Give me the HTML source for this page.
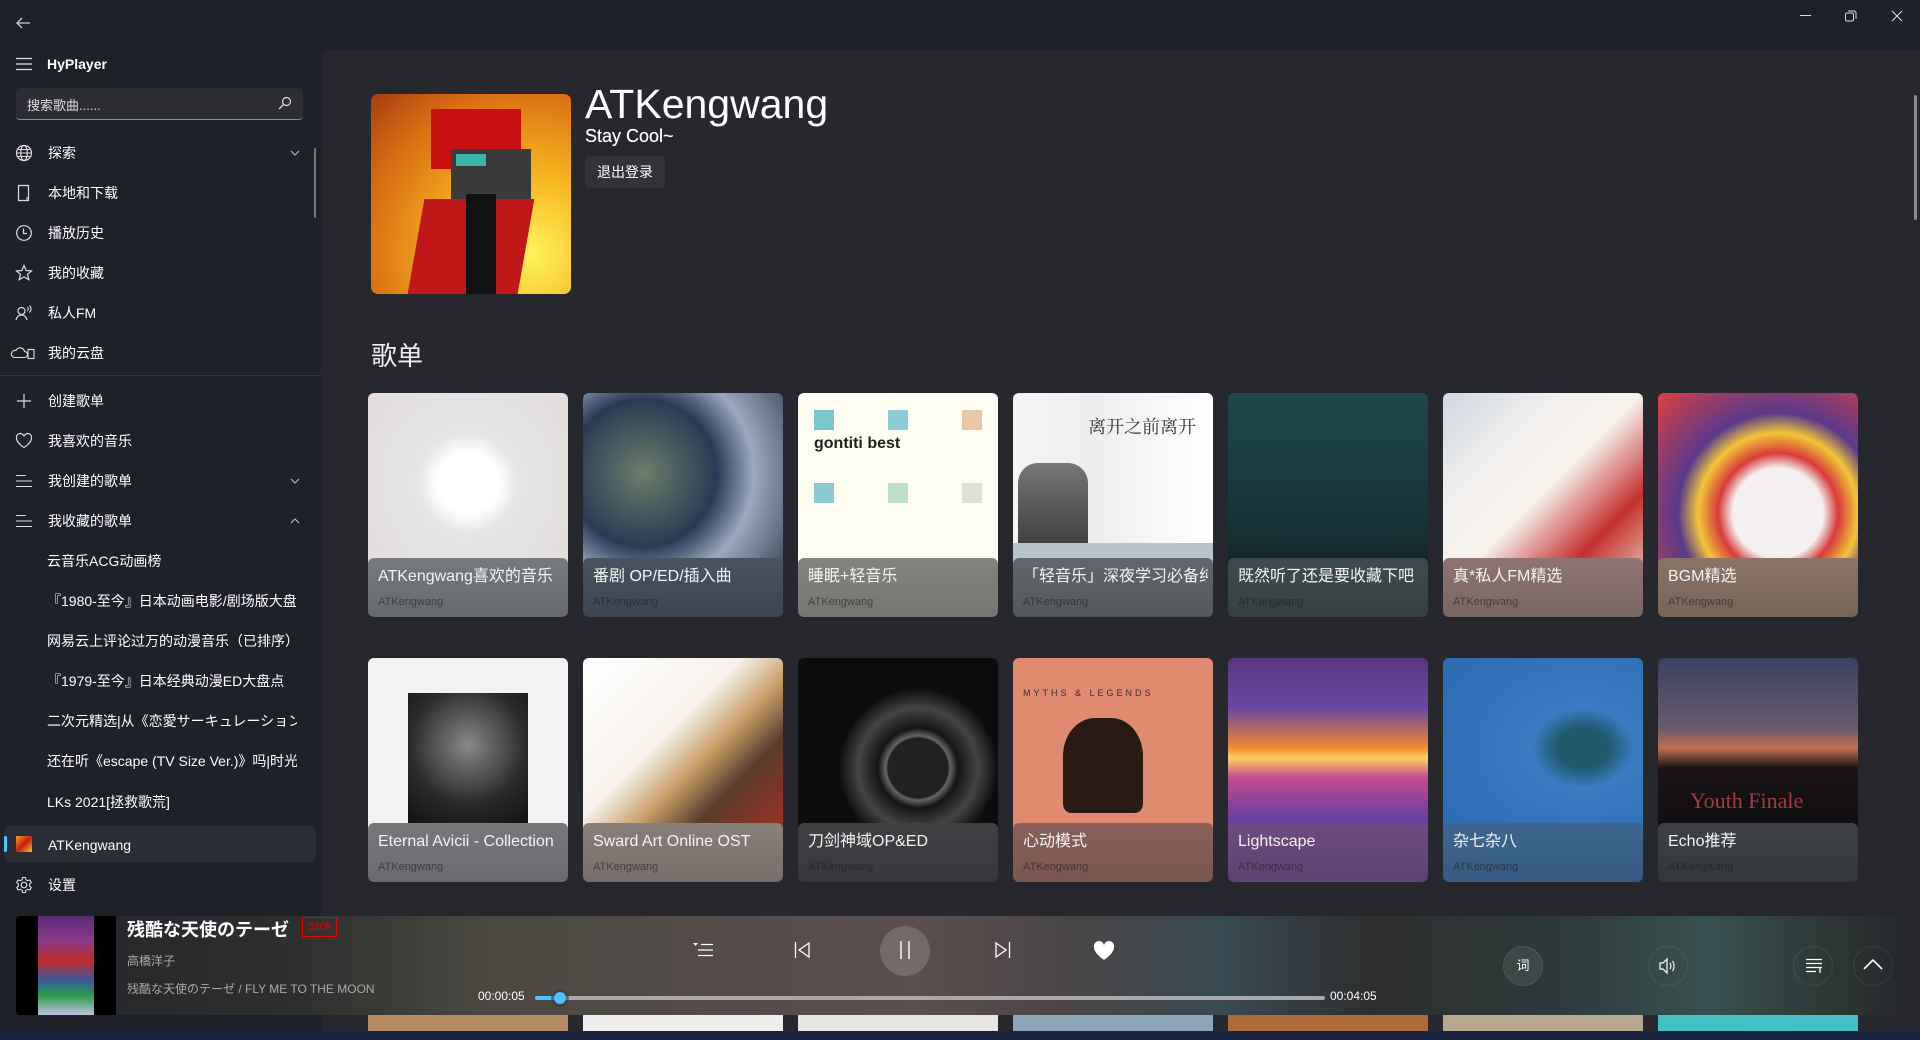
<!DOCTYPE html>
<html><head><meta charset="utf-8"><style>
*{margin:0;padding:0;box-sizing:border-box}
body{width:1920px;height:1040px;overflow:hidden;background:#1f2128;font-family:"Liberation Sans","Noto Sans CJK SC",sans-serif;color:#fff;position:relative}
.abs{position:absolute}
.panel{left:321px;top:49px;right:0;bottom:0;background:#26282d;border-top-left-radius:8px}
.nav{left:0;width:321px;font-size:14px;height:40px;line-height:40px}
.nav .ic{position:absolute;left:14px;top:10px;width:20px;height:20px}
.nav .t{position:absolute;left:48px;top:0;white-space:nowrap;width:250px;overflow:hidden}
.sub .t{left:47px}
.card{width:200px;height:224px;border-radius:6px;overflow:hidden}
.card .img{position:absolute;left:0;top:0;width:200px;height:200px}
.card .cap{position:absolute;left:0;top:165px;width:200px;height:59px;border-radius:6px 6px 0 0}
.card .ct{position:absolute;left:10px;top:9px;font-size:16px;line-height:20px;white-space:nowrap;width:185px;overflow:hidden;color:#f4f4f4}
.card .cs{position:absolute;left:10px;top:38px;font-size:11px;color:rgba(30,30,30,.6)}
.circ{border-radius:50%;border:1px solid rgba(255,255,255,.08)}
</style></head><body>
<svg class="abs" style="left:14px;top:15px" width="18" height="16" viewBox="0 0 18 16"><path d="M16 8H3M8 3L3 8l5 5" stroke="#ccc" stroke-width="1.3" fill="none"/></svg>
<div class="abs" style="left:1800px;top:15px;width:11px;height:1px;background:#ddd"></div>
<svg class="abs" style="left:1845px;top:10px" width="12" height="12"><rect x="0.5" y="3" width="8" height="8" rx="1.5" stroke="#ddd" fill="none"/><path d="M3 1h6a2 2 0 0 1 2 2v6" stroke="#ddd" fill="none"/></svg>
<svg class="abs" style="left:1891px;top:10px" width="12" height="12"><path d="M1 1l10 10M11 1L1 11" stroke="#ddd" stroke-width="1"/></svg>

<div class="abs panel"></div>
<div class="abs" style="left:1914px;top:95px;width:3px;height:125px;background:#8a8b8e;border-radius:2px"></div>

<svg class="abs" style="left:16px;top:57px" width="16" height="14"><path d="M0 1.5h16M0 7h16M0 12.5h16" stroke="#ddd" stroke-width="1.2"/></svg>
<div class="abs" style="left:47px;top:56px;font-size:14px;font-weight:bold">HyPlayer</div>
<div class="abs" style="left:16px;top:88px;width:287px;height:32px;background:#2c2e34;border-radius:4px;border-bottom:1px solid #8a8b8e"></div>
<div class="abs" style="left:27px;top:95px;font-size:13px;color:#ddd">搜索歌曲......</div>
<svg class="abs" style="left:278px;top:96px" width="14" height="14"><circle cx="8.5" cy="5.5" r="4" stroke="#ddd" fill="none" stroke-width="1.2"/><path d="M5.5 8.5L1 13" stroke="#ddd" stroke-width="1.3"/></svg>
<div class="abs" style="left:314px;top:148px;width:2px;height:70px;background:#777;border-radius:1px"></div>

<div class="abs nav" style="top:133px"><svg class="ic" viewBox="0 0 20 20"><circle cx="10" cy="10" r="7.5" fill="none" stroke="#ddd" stroke-width="1.2"/><ellipse cx="10" cy="10" rx="3.3" ry="7.5" fill="none" stroke="#ddd" stroke-width="1.2"/><path d="M2.5 10h15M3.5 6.5h13M3.5 13.5h13" stroke="#ddd" stroke-width="1.1"/></svg><span class="t">探索</span><svg class="abs" style="left:290px;top:17px" width="10" height="6"><path d="M1 1l4 4 4-4" stroke="#ccc" fill="none"/></svg></div>
<div class="abs nav" style="top:173px"><svg class="ic" viewBox="0 0 20 20"><path d="M4.5 2.5h10v15h-10z" fill="none" stroke="#ddd" stroke-width="1.2"/><path d="M13 14v3" stroke="#ddd"/></svg><span class="t">本地和下载</span></div>
<div class="abs nav" style="top:213px"><svg class="ic" viewBox="0 0 20 20"><circle cx="10" cy="10" r="7.3" fill="none" stroke="#ddd" stroke-width="1.2"/><path d="M9.5 5.5V10.5H13" stroke="#ddd" fill="none" stroke-width="1.2"/></svg><span class="t">播放历史</span></div>
<div class="abs nav" style="top:253px"><svg class="ic" viewBox="0 0 20 20"><path d="M10 2.5l2.2 5 5.3.4-4 3.5 1.3 5.3L10 13.9l-4.8 2.8 1.3-5.3-4-3.5 5.3-.4z" fill="none" stroke="#ddd" stroke-width="1.2"/></svg><span class="t">我的收藏</span></div>
<div class="abs nav" style="top:293px"><svg class="ic" viewBox="0 0 20 20"><circle cx="7.5" cy="8" r="3.5" fill="none" stroke="#ddd" stroke-width="1.2"/><path d="M2 17c1-4 3.5-5 5.5-5s4.5 1 5.5 5" fill="none" stroke="#ddd" stroke-width="1.2"/><path d="M13.5 4c1 1 1 3 0 4M15.5 2.5c2 2 2 5 0 7" fill="none" stroke="#ddd" stroke-width="1.1"/></svg><span class="t">私人FM</span></div>
<div class="abs nav" style="top:333px"><svg class="ic" style="left:10px;width:26px" viewBox="0 0 26 20"><path d="M4 14.5h10.5a3 3 0 0 0 0-6 4.5 4.5 0 0 0-8.5-1A3.5 3.5 0 0 0 4 14.5z" fill="none" stroke="#ddd" stroke-width="1.1"/><rect x="18" y="6.5" width="6" height="9" fill="none" stroke="#ddd" stroke-width="1.1"/></svg><span class="t">我的云盘</span></div>
<div class="abs" style="left:0;top:375px;width:321px;height:1px;background:#33353b"></div>
<div class="abs nav" style="top:381px"><svg class="ic" viewBox="0 0 20 20"><path d="M10 3v14M3 10h14" stroke="#ddd" stroke-width="1.2"/></svg><span class="t">创建歌单</span></div>
<div class="abs nav" style="top:421px"><svg class="ic" viewBox="0 0 20 20"><path d="M10 16.5S2.5 12 2.5 7.2A3.8 3.8 0 0 1 10 5.5a3.8 3.8 0 0 1 7.5 1.7C17.5 12 10 16.5 10 16.5z" fill="none" stroke="#ddd" stroke-width="1.2"/></svg><span class="t">我喜欢的音乐</span></div>
<div class="abs nav" style="top:461px"><svg class="ic" viewBox="0 0 20 20"><path d="M2 4.5h10M2 10h16M2 15.5h16" stroke="#ddd" stroke-width="1.1"/></svg><span class="t">我创建的歌单</span><svg class="abs" style="left:290px;top:17px" width="10" height="6"><path d="M1 1l4 4 4-4" stroke="#ccc" fill="none"/></svg></div>
<div class="abs nav" style="top:501px"><svg class="ic" viewBox="0 0 20 20"><path d="M2 4.5h10M2 10h16M2 15.5h16" stroke="#ddd" stroke-width="1.1"/></svg><span class="t">我收藏的歌单</span><svg class="abs" style="left:290px;top:17px" width="10" height="6"><path d="M1 5l4-4 4 4" stroke="#ccc" fill="none"/></svg></div>
<div class="abs nav sub" style="top:541px"><span class="t">云音乐ACG动画榜</span></div>
<div class="abs nav sub" style="top:581px"><span class="t">『1980-至今』日本动画电影/剧场版大盘点</span></div>
<div class="abs nav sub" style="top:621px"><span class="t">网易云上评论过万的动漫音乐（已排序）</span></div>
<div class="abs nav sub" style="top:661px"><span class="t">『1979-至今』日本经典动漫ED大盘点</span></div>
<div class="abs nav sub" style="top:701px"><span class="t">二次元精选|从《恋愛サーキュレーション》</span></div>
<div class="abs nav sub" style="top:741px"><span class="t">还在听《escape (TV Size Ver.)》吗|时光机</span></div>
<div class="abs nav sub" style="top:782px"><span class="t">LKs 2021[拯救歌荒]</span></div>
<div class="abs" style="left:4px;top:826px;width:312px;height:36px;background:#2c2e35;border-radius:5px"></div>
<div class="abs" style="left:4px;top:836px;width:3px;height:16px;background:#4cc2ff;border-radius:2px"></div>
<div class="abs" style="left:16px;top:836px;width:16px;height:16px;background:linear-gradient(135deg,#f6a21a,#c81d12 50%,#f3c030)"></div>
<div class="abs nav" style="top:825px"><span class="t">ATKengwang</span></div>
<div class="abs nav" style="top:865px"><svg class="ic" viewBox="0 0 20 20"><circle cx="10" cy="10" r="2.8" fill="none" stroke="#ddd" stroke-width="1.2"/><path d="M8.6 2.5h2.8l.5 2.2 1.8 1 2.2-.7 1.4 2.4-1.7 1.6v2l1.7 1.6-1.4 2.4-2.2-.7-1.8 1-.5 2.2H8.6l-.5-2.2-1.8-1-2.2.7-1.4-2.4L4.4 11V9L2.7 7.4l1.4-2.4 2.2.7 1.8-1z" fill="none" stroke="#ddd" stroke-width="1.1"/></svg><span class="t">设置</span></div>

<div class="abs" style="left:371px;top:94px;width:200px;height:200px;border-radius:7px;overflow:hidden;background:radial-gradient(circle at 80% 80%,#fff35a,#f7b51e 35%,#d86a12 75%,#a33e10)">
  <div class="abs" style="left:60px;top:15px;width:90px;height:60px;background:#c81010"></div>
  <div class="abs" style="left:80px;top:55px;width:80px;height:50px;background:#3a3a3a"></div>
  <div class="abs" style="left:85px;top:60px;width:30px;height:12px;background:#3bb5a8"></div>
  <div class="abs" style="left:45px;top:105px;width:110px;height:95px;background:#c01818;transform:skewX(-10deg)"></div>
  <div class="abs" style="left:95px;top:100px;width:30px;height:100px;background:#111"></div>
</div>
<div class="abs" style="left:585px;top:81px;font-size:41px;color:#fff">ATKengwang</div>
<div class="abs" style="left:585px;top:126px;font-size:18px;color:#fff;text-shadow:0 0 .5px #fff">Stay Cool~</div>
<div class="abs" style="left:585px;top:156px;width:80px;height:32px;background:#313338;border-radius:4px;font-size:14px;line-height:32px;text-align:center">退出登录</div>
<div class="abs" style="left:371px;top:336px;font-size:26px;color:#eee">歌单</div>

<div class="abs card" style="left:368px;top:393px"><div class="img" style="background:radial-gradient(circle at 50% 45%,#fff 0 30px,#e6e6e6 50px,#e2dada)"></div><div class="cap" style="background:linear-gradient(#777a7c,#66696b)"><div class="ct">ATKengwang喜欢的音乐</div><div class="cs">ATKengwang</div></div></div>
<div class="abs card" style="left:583px;top:393px"><div class="img" style="background:radial-gradient(circle at 30% 40%,#6a7f6a,#2a3a55 40%,#9aa8c0 60%,#2b3646)"></div><div class="cap" style="background:linear-gradient(#4a5360,#3c4450)"><div class="ct">番剧 OP/ED/插入曲</div><div class="cs">ATKengwang</div></div></div>
<div class="abs card" style="left:798px;top:393px"><div class="img" style="background:#fdfdf2"><div class="abs" style="left:16px;top:42px;font-size:16px;font-weight:bold;color:#222">gontiti best</div><div class="abs" style="left:16px;top:17px;width:20px;height:20px;background:#7cc6d0"></div><div class="abs" style="left:90px;top:17px;width:20px;height:20px;background:#8ccad5"></div><div class="abs" style="left:164px;top:17px;width:20px;height:20px;background:#e8c6a8"></div><div class="abs" style="left:16px;top:90px;width:20px;height:20px;background:#8bc9d4"></div><div class="abs" style="left:90px;top:90px;width:20px;height:20px;background:#bde0c8"></div><div class="abs" style="left:164px;top:90px;width:20px;height:20px;background:#e0e0d8"></div></div><div class="cap" style="background:linear-gradient(#828480,#747672)"><div class="ct">睡眠+轻音乐</div><div class="cs">ATKengwang</div></div></div>
<div class="abs card" style="left:1013px;top:393px"><div class="img" style="background:linear-gradient(90deg,#f4f4f4,#eee 40%,#fff);"><div class="abs" style="left:5px;top:70px;width:70px;height:100px;background:linear-gradient(#777,#333);border-radius:20px 20px 0 0"></div><div class="abs" style="left:75px;top:20px;font-size:18px;color:#333;font-family:'Noto Serif CJK SC',serif">离开之前离开</div><div class="abs" style="left:0;top:150px;width:200px;height:20px;background:#b8c4cc"></div></div><div class="cap" style="background:linear-gradient(#62666a,#55595e)"><div class="ct">「轻音乐」深夜学习必备纯音乐</div><div class="cs">ATKengwang</div></div></div>
<div class="abs card" style="left:1228px;top:393px"><div class="img" style="background:linear-gradient(#1d4a4e,#163236 70%,#0f1a1c)"></div><div class="cap" style="background:linear-gradient(#3f4b4e,#35403f)"><div class="ct">既然听了还是要收藏下吧</div><div class="cs">ATKengwang</div></div></div>
<div class="abs card" style="left:1443px;top:393px"><div class="img" style="background:linear-gradient(135deg,#cfd8e0,#f2f0ee 30%,#f7f2ec 50%,#c43030 75%,#e9d5c0)"></div><div class="cap" style="background:linear-gradient(#8e7472,#7a6664)"><div class="ct">真*私人FM精选</div><div class="cs">ATKengwang</div></div></div>
<div class="abs card" style="left:1658px;top:393px"><div class="img" style="background:radial-gradient(circle at 60% 60%,#f4f0f0 0 45px,#d83a3a 60px,#f2c638 80px,#5a3a8a 100px,#e04040)"></div><div class="cap" style="background:linear-gradient(#8a7466,#786458)"><div class="ct">BGM精选</div><div class="cs">ATKengwang</div></div></div>

<div class="abs card" style="left:368px;top:658px"><div class="img" style="background:#f2f2f2"><div class="abs" style="left:40px;top:35px;width:120px;height:130px;background:radial-gradient(circle at 50% 40%,#888,#2a2a2a 60%,#111)"></div></div><div class="cap" style="background:linear-gradient(#76787b,#696b6e)"><div class="ct">Eternal Avicii - Collection</div><div class="cs">ATKengwang</div></div></div>
<div class="abs card" style="left:583px;top:658px"><div class="img" style="background:linear-gradient(135deg,#fff,#f6f1ea 40%,#c9a06a 55%,#5a3a2a 70%,#b03020)"></div><div class="cap" style="background:linear-gradient(#8a807a,#776e6a)"><div class="ct">Sward Art Online OST</div><div class="cs">ATKengwang</div></div></div>
<div class="abs card" style="left:798px;top:658px"><div class="img" style="background:radial-gradient(circle at 60% 55%,#222 0 30px,#666 32px,#151515 40px,#444 60px,#0c0c0c 80px)"></div><div class="cap" style="background:linear-gradient(#3f4144,#36383b)"><div class="ct">刀剑神域OP&amp;ED</div><div class="cs">ATKengwang</div></div></div>
<div class="abs card" style="left:1013px;top:658px"><div class="img" style="background:#e08a70"><div class="abs" style="left:10px;top:30px;font-size:9px;letter-spacing:3px;color:#333">MYTHS &amp; LEGENDS</div><div class="abs" style="left:50px;top:60px;width:80px;height:95px;background:#2a1a14;border-radius:40% 40% 10% 10%"></div></div><div class="cap" style="background:linear-gradient(#8a6058,#7a5650)"><div class="ct">心动模式</div><div class="cs">ATKengwang</div></div></div>
<div class="abs card" style="left:1228px;top:658px"><div class="img" style="background:linear-gradient(#5b3580,#6a48a0 25%,#f08a30 45%,#ffd060 50%,#c04a90 60%,#6a40a0 80%,#4a3a9a)"></div><div class="cap" style="background:linear-gradient(#6e4a80,#5e4272)"><div class="ct">Lightscape</div><div class="cs">ATKengwang</div></div></div>
<div class="abs card" style="left:1443px;top:658px"><div class="img" style="background:radial-gradient(ellipse at 70% 45%,#1e5a6a 0 25px,#3a7ac0 50px,#2a68b0)"></div><div class="cap" style="background:linear-gradient(#3e6690,#365b82)"><div class="ct">杂七杂八</div><div class="cs">ATKengwang</div></div></div>
<div class="abs card" style="left:1658px;top:658px"><div class="img" style="background:linear-gradient(#3a4060,#6a5a70 35%,#c07050 45%,#1a1416 55%,#0a0a0a)"><div class="abs" style="left:32px;top:130px;font-size:22px;color:#a33b44;font-family:'Liberation Serif',serif">Youth Finale</div></div><div class="cap" style="background:linear-gradient(#3e4246,#34383c)"><div class="ct">Echo推荐</div><div class="cs">ATKengwang</div></div></div>

<div class="abs" style="left:368px;top:1012px;width:200px;height:20px;background:#b48a60"></div>
<div class="abs" style="left:583px;top:1012px;width:200px;height:20px;background:#eee"></div>
<div class="abs" style="left:798px;top:1012px;width:200px;height:20px;background:#e8e6e2"></div>
<div class="abs" style="left:1013px;top:1012px;width:200px;height:20px;background:#8aa6b8"></div>
<div class="abs" style="left:1228px;top:1012px;width:200px;height:20px;background:#b06a38"></div>
<div class="abs" style="left:1443px;top:1012px;width:200px;height:20px;background:#b8a890"></div>
<div class="abs" style="left:1658px;top:1012px;width:200px;height:20px;background:#42c0c8"></div>
<div class="abs" style="left:0;top:1031px;width:1920px;height:9px;background:#1a2440"></div>

<div class="abs" style="left:16px;top:916px;width:1882px;height:99px;border-radius:4px;background:linear-gradient(90deg,#23252a 0%,#2e302f 15%,#4a4840 25%,#544c4a 38%,#5a4e4e 48%,#4a4646 56%,#384a52 64%,#2f2f2f 72%,#2e3a3a 82%,#385150 90%,#2c3533 97%,#272a2d 100%)"></div>
<div class="abs" style="left:16px;top:916px;width:100px;height:99px;background:#000;border-radius:4px 0 0 4px"><div class="abs" style="left:22px;top:0;width:56px;height:99px;background:linear-gradient(#5a2a7a,#8a3a8a 25%,#c02a2a 45%,#3a5a9a 65%,#2a9a4a 80%,#c0c0e0)"></div></div>
<div class="abs" style="left:127px;top:916px;font-size:18px;font-weight:bold">残酷な天使のテーゼ</div>
<div class="abs" style="left:302px;top:917px;width:35px;height:20px;border:1px solid #e00;color:#e00;font-size:11px;line-height:18px;text-align:center">320k</div>
<div class="abs" style="left:127px;top:952px;font-size:12px;color:#aaa">高橋洋子</div>
<div class="abs" style="left:127px;top:980px;font-size:12px;color:#aaa">残酷な天使のテーゼ / FLY ME TO THE MOON</div>

<svg class="abs" style="left:692px;top:942px" width="22" height="16"><path d="M1 1h5l-2.5 3z" fill="#fff"/><path d="M9 2.5h12M6 8h15M6 13.5h15" stroke="#fff" stroke-width="1.3"/></svg>
<svg class="abs" style="left:794px;top:941px" width="16" height="18"><path d="M1.5 1v16" stroke="#fff" stroke-width="1.3"/><path d="M15 2L5 9l10 7z" fill="none" stroke="#fff" stroke-width="1.3"/></svg>
<div class="abs" style="left:880px;top:926px;width:50px;height:50px;border-radius:50%;background:rgba(140,128,130,.55)"></div>
<svg class="abs" style="left:897px;top:940px" width="16" height="20"><path d="M4 1v18M12 1v18" stroke="#fff" stroke-width="1.4"/></svg>
<svg class="abs" style="left:995px;top:941px" width="16" height="18"><path d="M14.5 1v16" stroke="#fff" stroke-width="1.3"/><path d="M1 2l10 7-10 7z" fill="none" stroke="#fff" stroke-width="1.3"/></svg>
<svg class="abs" style="left:1093px;top:941px" width="22" height="20"><path d="M11 19S1 12.5 1 6.3A5 5 0 0 1 11 4a5 5 0 0 1 10 2.3C21 12.5 11 19 11 19z" fill="#fff"/></svg>

<div class="abs" style="left:478px;top:989px;font-size:12px">00:00:05</div>
<div class="abs" style="left:535px;top:996px;width:790px;height:4px;background:#a8a8a6;border-radius:2px"></div>
<div class="abs" style="left:535px;top:996px;width:25px;height:4px;background:#4cc2ff;border-radius:2px"></div>
<div class="abs" style="left:554px;top:992px;width:12px;height:12px;border-radius:50%;background:#4cc2ff;box-shadow:0 0 0 3px rgba(60,60,60,.6)"></div>
<div class="abs" style="left:1330px;top:989px;font-size:12px">00:04:05</div>

<div class="abs circ" style="left:1503px;top:946px;width:40px;height:40px;background:rgba(255,255,255,.08);font-size:13px;line-height:38px;text-align:center">词</div>
<div class="abs circ" style="left:1648px;top:946px;width:40px;height:40px"></div>
<svg class="abs" style="left:1659px;top:957px" width="18" height="18"><path d="M1 6h3l4-4v14l-4-4H1z" fill="none" stroke="#fff" stroke-width="1.2"/><path d="M11 6c1.2 1.6 1.2 4.4 0 6M13.5 4c2 2.6 2 7.4 0 10" fill="none" stroke="#fff" stroke-width="1.1"/></svg>
<div class="abs circ" style="left:1793px;top:946px;width:40px;height:40px"></div>
<svg class="abs" style="left:1805px;top:958px" width="18" height="17"><path d="M1 1.5h16M1 5.5h16M1 9.5h16M1 13.5h10" stroke="#fff" stroke-width="1.3"/><path d="M15 10v5" stroke="#fff" stroke-width="1.3"/></svg>
<div class="abs circ" style="left:1853px;top:946px;width:40px;height:40px"></div>
<svg class="abs" style="left:1863px;top:958px" width="20" height="12"><path d="M1 11L10 2l9 9" stroke="#fff" stroke-width="1.6" fill="none"/></svg>
</body></html>
